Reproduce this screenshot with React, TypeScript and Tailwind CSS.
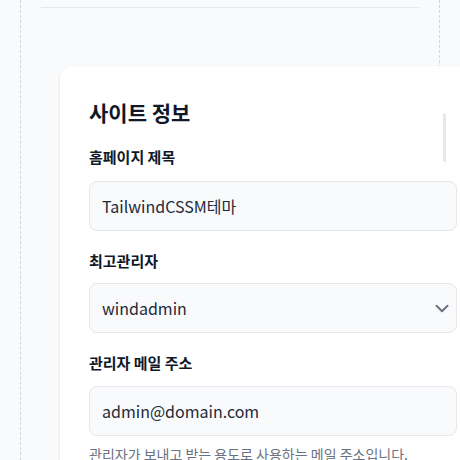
import React from 'react'

const font = { fontFamily: '"Noto Sans CJK KR", "Noto Sans", sans-serif' }

const Label = ({ children, className = '' }: { children: React.ReactNode; className?: string }) => (
  <label className={`block text-[15px] leading-[22px] font-semibold text-gray-900 ${className}`}>
    {children}
  </label>
)

const Field = ({ value, className = '', chevron }: { value: string; className?: string; chevron?: boolean }) => (
  <div
    className={`flex items-center justify-between h-[50px] rounded-lg border border-gray-200 bg-gray-50 pl-3 text-base text-gray-800 ${chevron ? 'pr-[3px]' : 'pr-3'} ${className}`}
  >
    <span>{value}</span>
    {chevron && (
      <svg width="22" height="22" viewBox="0 0 20 20" fill="none" className="text-gray-500">
        <path d="M5 8l5 5 5-5" stroke="currentColor" strokeWidth="1.8" strokeLinecap="round" strokeLinejoin="round" />
      </svg>
    )}
  </div>
)

export default function App() {
  return (
    <div style={font} className="relative w-[460px] h-[460px] overflow-hidden bg-gray-50">
      <div className="mx-5 h-full border-x border-dashed border-gray-300">
        <div className="px-5">
          <div className="h-2 border-b border-gray-200" />
        </div>

        <div className="mt-[58px] ml-[39px] w-[440px] rounded-xl bg-white shadow-sm pt-8 pl-[29px] pr-[40px] pb-10">
          <h2 className="text-[21px] leading-7 font-bold text-gray-900">사이트 정보</h2>

          <Label className="mt-5">홈페이지 제목</Label>
          <Field value="TailwindCSSM테마" className="mt-[13px] w-[368px]" />

          <Label className="mt-[19px]">최고관리자</Label>
          <Field value="windadmin" chevron className="mt-[11px] w-[368px]" />

          <Label className="mt-[19px]">관리자 메일 주소</Label>
          <Field value="admin@domain.com" className="mt-3 w-[368px]" />

          <p className="mt-2 text-sm leading-5 text-gray-500">관리자가 보내고 받는 용도로 사용하는 메일 주소입니다.</p>
        </div>
      </div>

      <div className="absolute left-[443px] top-[113px] w-[3px] h-[49px] rounded-full bg-gray-200" />
    </div>
  )
}
